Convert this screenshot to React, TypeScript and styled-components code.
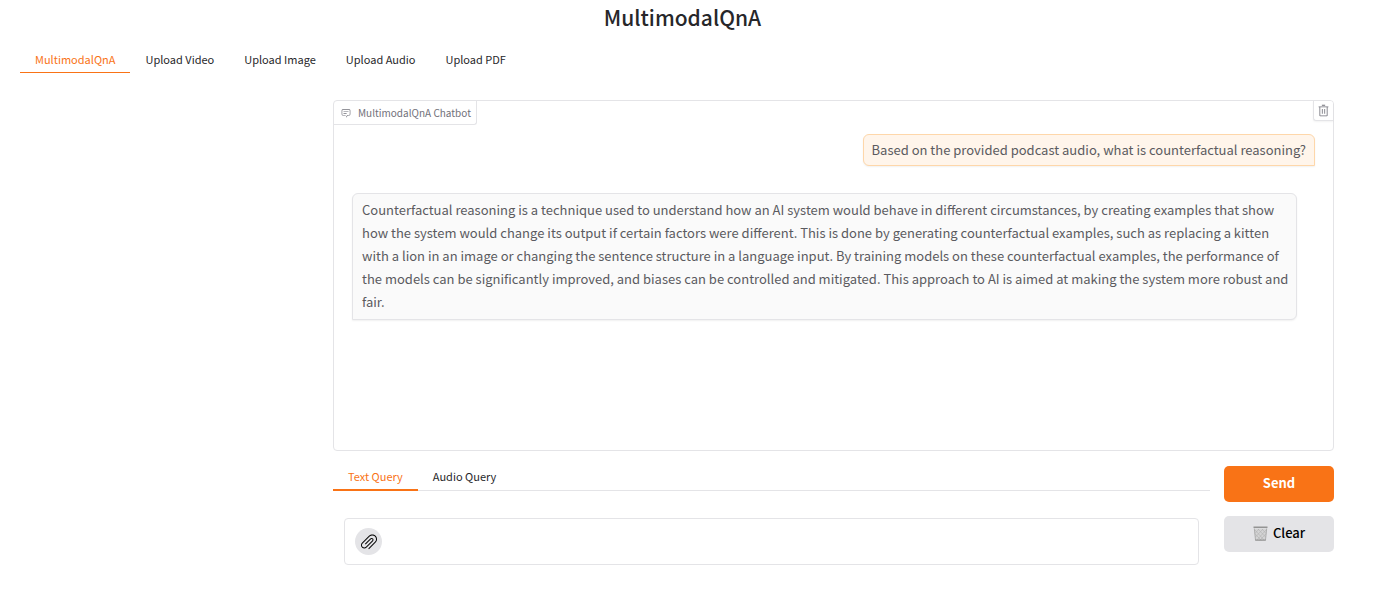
import React, { useState } from "react";
import styled, { createGlobalStyle } from "styled-components";

const GlobalStyle = createGlobalStyle`
  *, *::before, *::after { box-sizing: border-box; }
  body {
    margin: 0;
    background: #ffffff;
    color: #27272a;
    font-family: "Noto Sans CJK SC", "Noto Sans", sans-serif;
    font-size: 14px;
    line-height: 20px;
  }
  button, textarea { font-family: inherit; }
`;

const Page = styled.main`
  padding: 0 31px 32px 20px;
`;

const Title = styled.h1`
  margin: 0;
  padding: 1px 0 13px;
  text-align: center;
  font-size: 21px;
  line-height: 32px;
  font-weight: 500;
`;

const TabList = styled.div<{ $lined?: boolean }>`
  display: flex;
  box-shadow: ${(p) => (p.$lined ? "inset 0 -1px 0 #e4e4e7" : "none")};
`;

const Tab = styled.button<{ $active: boolean; $compact?: boolean }>`
  border: 0;
  border-bottom: ${(p) => (p.$compact ? 2 : 1)}px solid
    ${(p) => (p.$active ? "#f97316" : "transparent")};
  background: none;
  padding: ${(p) => (p.$compact ? "1px 15px 4px" : "4px 15px")};
  font-size: 11px;
  line-height: 18px;
  color: ${(p) => (p.$active ? "#f97316" : "#27272a")};
  white-space: nowrap;
  cursor: pointer;
`;

const Panel = styled.section`
  display: grid;
  grid-template-columns: minmax(0, 288px) minmax(0, 1fr);
  gap: 14px;
  padding: 27px 11px 0;
`;

const Workspace = styled.div`
  grid-column: 2;
  display: flex;
  flex-direction: column;
  gap: 15px;
`;

const Chatbot = styled.section`
  display: flex;
  flex-direction: column;
  min-height: 351px;
  border: 1px solid #e4e4e7;
  border-radius: 4px;
`;

const ChatHeader = styled.header`
  display: flex;
  justify-content: space-between;
  align-items: flex-start;
`;

const ChatLabel = styled.h2`
  display: flex;
  align-items: center;
  gap: 7px;
  margin: 0;
  padding: 3px 5px 3px 7px;
  border: solid #e4e4e7;
  border-width: 0 1px 1px 0;
  border-radius: 3px 0 3px 0;
  color: #71717a;
  font-size: 10px;
  line-height: 17px;
  font-weight: 400;
`;

const ClearChat = styled.button`
  display: flex;
  padding: 3px;
  border: solid #e4e4e7;
  border-width: 0 0 1px 1px;
  border-radius: 0 3px 0 3px;
  background: #ffffff;
  color: #71717a;
  box-shadow: 0 1px 2px rgba(0, 0, 0, 0.05);
  cursor: pointer;
`;

const Messages = styled.div`
  display: flex;
  flex-direction: column;
  gap: 27px;
  padding: 9px 18px 18px;
`;

const Bubble = styled.p<{ $from: "user" | "bot" }>`
  margin: 0;
  align-self: ${(p) => (p.$from === "user" ? "flex-end" : "flex-start")};
  margin-right: ${(p) => (p.$from === "user" ? 0 : 18)}px;
  padding: ${(p) => (p.$from === "user" ? "3px 8px 4px" : "4px 6px 6px 9px")};
  border: 1px solid ${(p) => (p.$from === "user" ? "#fed7aa" : "#e4e4e7")};
  border-radius: ${(p) => (p.$from === "user" ? "6px 6px 0 6px" : "6px 6px 6px 0")};
  background: ${(p) => (p.$from === "user" ? "#fff5eb" : "#fafafa")};
  box-shadow: 0 1px 2px rgba(0, 0, 0, 0.06);
  color: #5b5b5f;
  font-size: 13px;
  line-height: 23px;
`;

const QueryRow = styled.div`
  display: grid;
  grid-template-columns: minmax(0, 1fr) 110px;
  gap: 14px;
`;

const QueryBody = styled.div`
  padding: 27px 11px 0;
`;

const Composer = styled.div`
  display: flex;
  align-items: center;
  gap: 8px;
  padding: 9px 10px;
  border: 1px solid #e4e4e7;
  border-radius: 4px;
`;

const AttachButton = styled.button`
  display: flex;
  align-items: center;
  justify-content: center;
  width: 27px;
  height: 27px;
  flex: none;
  padding: 0;
  border: 0;
  border-radius: 50%;
  background: #e4e4e7;
  color: #000000;
  cursor: pointer;
`;

const QueryInput = styled.textarea`
  flex: 1;
  height: 27px;
  padding: 3px 0;
  border: 0;
  outline: 0;
  resize: none;
  background: transparent;
  font-size: 13px;
  line-height: 20px;
`;

const Actions = styled.div`
  display: flex;
  flex-direction: column;
  gap: 14px;
`;

const ActionButton = styled.button<{ $primary?: boolean }>`
  display: flex;
  align-items: center;
  justify-content: center;
  gap: 5px;
  height: 36px;
  padding: 0 12px 2px;
  border: 0;
  border-radius: 5px;
  background: ${(p) => (p.$primary ? "#f97316" : "#e4e4e7")};
  color: ${(p) => (p.$primary ? "#ffffff" : "#000000")};
  font-size: 13px;
  line-height: 20px;
  font-weight: ${(p) => (p.$primary ? 700 : 500)};
  cursor: pointer;
`;

const ChatIcon = () => (
  <svg width="10" height="10" viewBox="0 0 32 32" fill="currentColor" aria-hidden="true">
    <path d="M17.74 30L16 29l4-7h6a2 2 0 0 0 2-2V8a2 2 0 0 0-2-2H6a2 2 0 0 0-2 2v12a2 2 0 0 0 2 2h9v2H6a4 4 0 0 1-4-4V8a4 4 0 0 1 4-4h20a4 4 0 0 1 4 4v12a4 4 0 0 1-4 4h-4.84Z" />
    <path d="M8 10h16v2H8zm0 6h10v2H8z" />
  </svg>
);

const TrashIcon = () => (
  <svg width="13" height="13" viewBox="0 0 32 32" fill="currentColor" aria-hidden="true">
    <path d="M12 12h2v12h-2zM18 12h2v12h-2zM4 6v2h2v20a2 2 0 0 0 2 2h16a2 2 0 0 0 2-2V8h2V6zm4 22V8h16v20zM12 2h8v2h-8z" />
  </svg>
);

const PaperclipIcon = () => (
  <svg width="16" height="16" viewBox="0 0 1920 1920" fill="currentColor" aria-hidden="true">
    <path
      fillRule="evenodd"
      d="M1752.768 221.109C1532.646.986 1174.283.986 954.161 221.109l-838.588 838.588c-154.052 154.165-154.052 404.894 0 558.946 149.534 149.421 409.976 149.308 559.059 0l758.738-758.626c87.982-88.094 87.982-231.417 0-319.51-88.32-88.208-231.642-87.982-319.51 0l-638.796 638.908 79.85 79.849 638.795-638.908c43.934-43.821 115.539-43.934 159.812 0 43.934 44.047 43.934 115.877 0 159.812l-758.739 758.625c-110.23 110.118-289.355 110.005-399.36 0-110.118-110.117-110.005-289.242 0-399.247l838.588-838.588c175.963-175.962 462.382-176.188 638.909 0 176.075 176.188 176.075 462.607 0 638.795l-798.607 798.72 79.849 79.85 798.607-798.72c220.01-220.123 220.01-578.485 0-798.494Z"
    />
  </svg>
);

const WastebasketIcon = () => (
  <svg width="15" height="15" viewBox="0 0 15 15" aria-hidden="true">
    <path d="M1.2 2.5h12.6l-1.2 12H2.4z" fill="#d4d4d5" />
    <path
      d="M2 4l9 10M5 3l7.500 8M9 3l4 4.500M2.300 8l6 6.500M13 4L4 14M10 3l-7.500 8M6 3L2 7.500M12.700 8l-6 6.500"
      stroke="#b0b0b0"
      strokeWidth="0.6"
      fill="none"
    />
    <path d="M1.300 2.500l1.200 11.500M13.700 2.500l-1.200 11.500" stroke="#a3a3a3" strokeWidth="0.8" />
    <path d="M0.500 0.500h14v1.500h-14zM2.200 13.500h10.600v1.200H2.200z" fill="#949494" />
  </svg>
);

const pages = ["MultimodalQnA", "Upload Video", "Upload Image", "Upload Audio", "Upload PDF"];
const queryKinds = ["Text Query", "Audio Query"];

export default function App() {
  const [page, setPage] = useState(pages[0]);
  const [kind, setKind] = useState(queryKinds[0]);
  const [query, setQuery] = useState("");

  return (
    <>
      <GlobalStyle />
      <Page>
        <Title>MultimodalQnA</Title>
        <TabList role="tablist" aria-label="Pages">
          {pages.map((name) => (
            <Tab
              key={name}
              type="button"
              role="tab"
              aria-selected={name === page}
              $active={name === page}
              onClick={() => setPage(name)}
            >
              {name}
            </Tab>
          ))}
        </TabList>
        <Panel>
          <Workspace>
            <Chatbot>
              <ChatHeader>
                <ChatLabel>
                  <ChatIcon />
                  MultimodalQnA Chatbot
                </ChatLabel>
                <ClearChat type="button" aria-label="Clear conversation">
                  <TrashIcon />
                </ClearChat>
              </ChatHeader>
              <Messages>
                <Bubble $from="user">
                  Based on the provided podcast audio, what is counterfactual reasoning?
                </Bubble>
                <Bubble $from="bot">
                  Counterfactual reasoning is a technique used to understand how an AI system would
                  behave in different circumstances, by creating examples that show how the system
                  would change its output if certain factors were different. This is done by
                  generating counterfactual examples, such as replacing a kitten with a lion in an
                  image or changing the sentence structure in a language input. By training models
                  on these counterfactual examples, the performance of the models can be
                  significantly improved, and biases can be controlled and mitigated. This approach
                  to AI is aimed at making the system more robust and fair.
                </Bubble>
              </Messages>
            </Chatbot>
            <QueryRow>
              <div>
                <TabList role="tablist" aria-label="Query type" $lined>
                  {queryKinds.map((name) => (
                    <Tab
                      key={name}
                      type="button"
                      role="tab"
                      aria-selected={name === kind}
                      $active={name === kind}
                      $compact
                      onClick={() => setKind(name)}
                    >
                      {name}
                    </Tab>
                  ))}
                </TabList>
                <QueryBody>
                  <Composer>
                    <AttachButton type="button" aria-label="Attach a file">
                      <PaperclipIcon />
                    </AttachButton>
                    <QueryInput
                      aria-label="Query"
                      rows={1}
                      value={query}
                      onChange={(e) => setQuery(e.target.value)}
                    />
                  </Composer>
                </QueryBody>
              </div>
              <Actions>
                <ActionButton type="button" $primary>
                  Send
                </ActionButton>
                <ActionButton type="button" onClick={() => setQuery("")}>
                  <WastebasketIcon />
                  Clear
                </ActionButton>
              </Actions>
            </QueryRow>
          </Workspace>
        </Panel>
      </Page>
    </>
  );
}
